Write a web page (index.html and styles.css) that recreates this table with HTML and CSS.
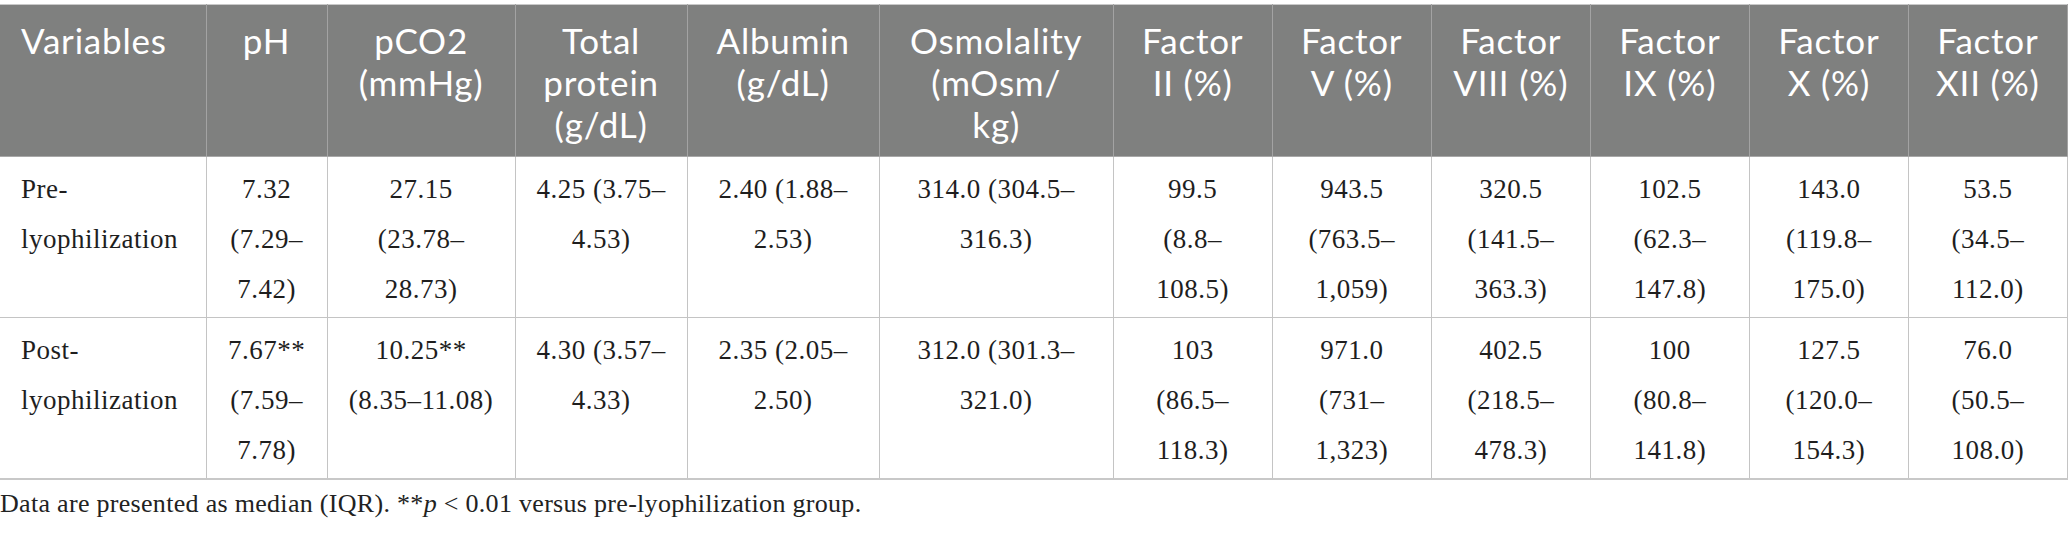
FILE: index.html
```html
<!DOCTYPE html>
<html lang="en">
<head>
<meta charset="utf-8">
<title>Table</title>
<link rel="stylesheet" href="styles.css">
</head>
<body>
<div class="page">
  <table class="data">
    <colgroup>
      <col class="c-var">
      <col class="c-ph">
      <col class="c-pco2">
      <col class="c-tp">
      <col class="c-alb">
      <col class="c-osm">
      <col class="c-f"><col class="c-f"><col class="c-f"><col class="c-f"><col class="c-f"><col class="c-f">
    </colgroup>
    <thead>
      <tr>
        <th class="left">Variables</th>
        <th>pH</th>
        <th>pCO2<br>(mmHg)</th>
        <th>Total<br>protein<br>(g/dL)</th>
        <th>Albumin<br>(g/dL)</th>
        <th>Osmolality<br>(mOsm/<br>kg)</th>
        <th>Factor<br>II (%)</th>
        <th>Factor<br>V (%)</th>
        <th>Factor<br>VIII (%)</th>
        <th>Factor<br>IX (%)</th>
        <th>Factor<br>X (%)</th>
        <th>Factor<br>XII (%)</th>
      </tr>
    </thead>
    <tbody>
      <tr>
        <td class="left">Pre-<br>lyophilization</td>
        <td>7.32<br>(7.29–<br>7.42)</td>
        <td>27.15<br>(23.78–<br>28.73)</td>
        <td>4.25 (3.75–<br>4.53)</td>
        <td>2.40 (1.88–<br>2.53)</td>
        <td>314.0 (304.5–<br>316.3)</td>
        <td>99.5<br>(8.8–<br>108.5)</td>
        <td>943.5<br>(763.5–<br>1,059)</td>
        <td>320.5<br>(141.5–<br>363.3)</td>
        <td>102.5<br>(62.3–<br>147.8)</td>
        <td>143.0<br>(119.8–<br>175.0)</td>
        <td>53.5<br>(34.5–<br>112.0)</td>
      </tr>
      <tr>
        <td class="left">Post-<br>lyophilization</td>
        <td>7.67**<br>(7.59–<br>7.78)</td>
        <td>10.25**<br>(8.35–11.08)</td>
        <td>4.30 (3.57–<br>4.33)</td>
        <td>2.35 (2.05–<br>2.50)</td>
        <td>312.0 (301.3–<br>321.0)</td>
        <td>103<br>(86.5–<br>118.3)</td>
        <td>971.0<br>(731–<br>1,323)</td>
        <td>402.5<br>(218.5–<br>478.3)</td>
        <td>100<br>(80.8–<br>141.8)</td>
        <td>127.5<br>(120.0–<br>154.3)</td>
        <td>76.0<br>(50.5–<br>108.0)</td>
      </tr>
    </tbody>
  </table>
  <p class="note">Data are presented as median (IQR). **<i>p</i> &lt; 0.01 versus pre-lyophilization group.</p>
</div>
</body>
</html>
```

FILE: styles.css
```css
html, body {
  margin: 0;
  padding: 0;
  background: #ffffff;
}

.page {
  padding-top: 4px;
}

.data {
  table-layout: fixed;
  border-collapse: collapse;
  width: 2068px;
}

.c-var { width: 206px; }
.c-ph { width: 121px; }
.c-pco2 { width: 188px; }
.c-tp { width: 172px; }
.c-alb { width: 192px; }
.c-osm { width: 234px; }
.c-f { width: 159px; }

.data th {
  background: #7f807f;
  color: #ffffff;
  font-family: Lato, "Open Sans", sans-serif;
  font-weight: 400;
  font-size: 35px;
  letter-spacing: 0.8px;
  line-height: 42px;
  text-align: center;
  vertical-align: top;
  padding: 14px 8px 11px;
  border: 1px solid #a3a3a3;
  border-top-color: #c9c9c9;
  border-bottom: 1px solid #a8a8a8;
  white-space: nowrap;
}

.data td {
  font-family: "Liberation Serif", "Times New Roman", serif;
  font-size: 27px;
  letter-spacing: 0.5px;
  line-height: 50px;
  color: #1e1e1e;
  text-align: center;
  vertical-align: top;
  padding: 7px 10px 3px;
  border: 1px solid #c4c4c4;
  white-space: nowrap;
}

.data tbody tr:last-child td {
  border-bottom: 2px solid #c8c8c8;
}

.data th.left,
.data td.left {
  text-align: left;
  padding-left: 21px;
}

.data th:first-child,
.data td:first-child {
  border-left: none;
}

.note {
  margin: 9px 0 0;
  font-family: "Liberation Serif", "Times New Roman", serif;
  font-size: 26px;
  letter-spacing: 0.3px;
  line-height: 30px;
  color: #222222;
}
```
